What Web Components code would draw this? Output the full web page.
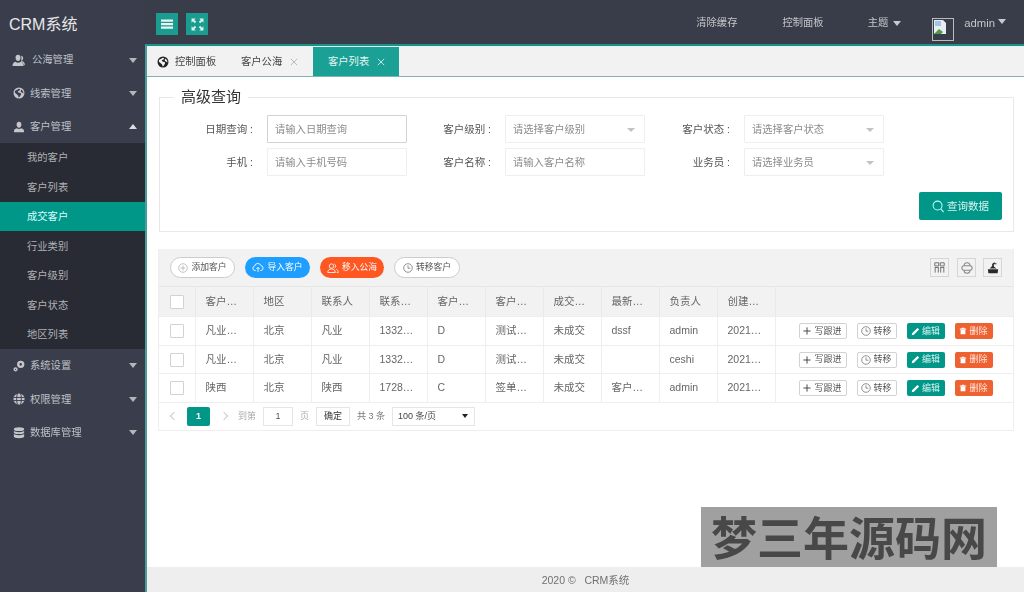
<!DOCTYPE html>
<html lang="zh-CN">
<head>
<meta charset="utf-8">
<title>CRM系统</title>
<style>
html,body{margin:0;height:100%;overflow:hidden;background:#fff}
body{font:10.3px/1.2 "Liberation Sans","Noto Sans CJK SC",sans-serif;color:#666}
</style>
</head>
<body>
<crm-app>
  <crm-sidebar slot="side">
    <crm-nav-item icon="secret" indent>公海管理</crm-nav-item>
    <crm-nav-item icon="globe">线索管理</crm-nav-item>
    <crm-nav-item icon="user" open>客户管理</crm-nav-item>
    <crm-sub-menu>
      <crm-sub-item>我的客户</crm-sub-item>
      <crm-sub-item>客户列表</crm-sub-item>
      <crm-sub-item active>成交客户</crm-sub-item>
      <crm-sub-item>行业类别</crm-sub-item>
      <crm-sub-item>客户级别</crm-sub-item>
      <crm-sub-item>客户状态</crm-sub-item>
      <crm-sub-item>地区列表</crm-sub-item>
    </crm-sub-menu>
    <crm-nav-item icon="key">系统设置</crm-nav-item>
    <crm-nav-item icon="ring">权限管理</crm-nav-item>
    <crm-nav-item icon="db">数据库管理</crm-nav-item>
  </crm-sidebar>
  <crm-header slot="head"></crm-header>
  <crm-tabs slot="main"></crm-tabs>
  <crm-search slot="main"></crm-search>
  <crm-table slot="main"></crm-table>
  <crm-footer slot="foot"></crm-footer>
  <crm-watermark slot="over"></crm-watermark>
</crm-app>
<script>
const ICONS={
 secret:'<svg viewBox="0 0 14 14" width="13" height="13"><path fill="currentColor" d="M6.500.8c1.700 0 2.700 1.300 2.700 3.100 0 1.900-1.100 3.700-2.700 3.700S3.800 5.800 3.800 3.900C3.800 2.100 4.800.8 6.500.8zM.6 12.800c0-2.500 1-4 3-4.500.8.600 1.800 1 2.900 1s2.100-.4 2.900-1c2 .5 3 2 3 4.500z"/><path fill="currentColor" d="M10 1.800c1.300.3 2 1.200 2 2.600 0 1.500-.7 2.700-1.800 3 .9.700 2.500.8 3.500 2.800V12h-1c-.3-1.800-1.200-3-3-3.800.3-1.200.6-4 .3-6.400z"/></svg>',
 globe:'<svg viewBox="0 0 14 14" width="12" height="12"><path fill="currentColor" fill-rule="evenodd" d="M7 .6a6.400 6.400 0 1 0 0 12.800A6.400 6.400 0 0 0 7 .6zM2.400 4.400 5 3.200 6.600 2l1.800.6-.8 1.600-1.600.4-.4 1.200 1.600 1 2 .6.200 1.400-1.600 2.600-1.200.8-.6-2.400L4 8.200 2.200 6.800zM10 2.800l1.800 2.400.4 2.400-1.200-.8-1.400-.6-.8-1.400z"/></svg>',
 user:'<svg viewBox="0 0 14 14" width="12" height="12"><path fill="currentColor" d="M7 .8c1.800 0 2.800 1.300 2.800 3.200S8.800 8 7 8 4.200 5.900 4.200 4 5.200.8 7 .8zM1.200 13v-1.600c0-1.500 1.100-2.500 3.300-3 .7.500 1.500.8 2.500.8s1.800-.3 2.500-.8c2.200.5 3.300 1.500 3.300 3V13z"/></svg>',
 key:'<svg viewBox="0 0 14 14" width="12" height="12"><path fill="currentColor" fill-rule="evenodd" d="M9 .8a4.300 4.300 0 1 1 0 8.600A4.300 4.300 0 0 1 9 .8zm0 2.800a1.500 1.500 0 1 0 0 3 1.500 1.500 0 0 0 0-3zM3 8.400a2.500 2.500 0 1 1 0 5 2.500 2.500 0 0 1 0-5zm0 1.700a.8.800 0 1 0 0 1.600.8.800 0 0 0 0-1.600z"/></svg>',
 ring:'<svg viewBox="0 0 14 14" width="12" height="12"><circle cx="7" cy="7" r="6.500" fill="currentColor"/><g fill="none" stroke="#3a3e4c" stroke-width="1.100"><path d="M.5 5.200h13M.5 8.800h13"/><path d="M5.200.5C4 3 4 11 5.200 13.500M8.800.5C10 3 10 11 8.800 13.500"/></g></svg>',
 db:'<svg viewBox="0 0 14 14" width="12" height="12"><g fill="currentColor"><ellipse cx="7" cy="2.600" rx="6" ry="2.200"/><path d="M1 4.300c1 1.200 3 1.700 6 1.700s5-.5 6-1.700v2.200C13 7.700 10.400 8.300 7 8.300s-6-.6-6-1.800zM1 8c1 1.200 3 1.700 6 1.700S12 9.200 13 8v3.200c0 1.200-2.600 1.900-6 1.900s-6-.7-6-1.900z"/></g></svg>',
 plusc:'<svg viewBox="0 0 14 14" width="10" height="10" fill="none" stroke="#aaa"><circle cx="7" cy="7" r="6"/><path d="M7 3.500v7M3.500 7h7"/></svg>',
 cloud:'<svg viewBox="0 0 16 14" width="12" height="11" fill="none" stroke="#fff" stroke-width="1.200"><path d="M5 11H3.800a3 3 0 0 1-.3-5.900 4.300 4.300 0 0 1 8.300-.6 3.300 3.300 0 0 1 .4 6.500H11M8 12.800V7M5.800 9 8 6.800 10.200 9"/></svg>',
 people:'<svg viewBox="0 0 16 14" width="12" height="12" fill="none" stroke="#fff" stroke-width="1.100"><circle cx="6" cy="4.500" r="3"/><path d="M1 13c0-3 2-4.800 5-4.800s5 1.800 5 4.800zM10 1.800a3 3 0 0 1 0 5.400M12.500 8.800c1.500.6 2.500 2 2.500 4.200h-2"/></svg>',
 clock:'<svg viewBox="0 0 14 14" width="10" height="10" fill="none" stroke="#666"><circle cx="7" cy="7" r="6"/><path d="M7 3.300V7.300h3.200"/></svg>',
 grid:'<svg viewBox="0 0 14 14" width="11" height="11" fill="none" stroke="#555"><path d="M1 1h5v4H1zM8 1h5v4H8zM1 7h5M8 7h5M1.500 7v6.500M5.500 7v6.500M8.500 7v6.500M12.500 7v6.500"/></svg>',
 print:'<svg viewBox="0 0 14 14" width="12" height="12" fill="none" stroke="#888" stroke-width="1.200"><path d="M3.500 4.500C3.500 2.300 4.500 1 7 1s3.500 1.300 3.500 3.500"/><rect x="1" y="4.500" width="12" height="5" rx="2.500"/><path d="M3.500 9.500c0 2.300 1 3.500 3.500 3.500s3.500-1.200 3.500-3.500"/></svg>',
 boat:'<svg viewBox="0 0 14 14" width="12" height="12"><path fill="#2a2a2a" d="M1 8.500h12l-.6 4.500H1.600zM3 7.500l3-2.800V2.200L8.800 0v1.500H11v1.200H8v2.500l3 2.300z"/></svg>',
 search:'<svg viewBox="0 0 14 14" width="13" height="13" fill="none" stroke="#bff" stroke-width="1.100"><circle cx="6" cy="6" r="4.800"/><path d="m9.500 9.500 3 3.500"/></svg>',
 plus:'<svg viewBox="0 0 10 10" width="8" height="8" stroke="#444" stroke-width="1.200"><path d="M5 .5v9M.5 5h9"/></svg>',
 pen:'<svg viewBox="0 0 10 10" width="9" height="9"><path fill="#fff" d="M7.200 1 9 2.800 3.200 8.600.8 9.200l.6-2.400z"/></svg>',
 trash:'<svg viewBox="0 0 10 10" width="8" height="8"><path fill="#fff" d="M1 2h8v1H1zM3.500.8h3V2h-3zM2 3.500h6V9.200H2z"/></svg>',
 x:c=>`<svg class="x" viewBox="0 0 8 8" width="8" height="8" fill="none" stroke="${c}"><path d="m.8.800 6.400 6.400M7.200.800.8 7.200"/></svg>`
};
function def(name,html,init){
  customElements.define(name,class extends HTMLElement{
    constructor(){super();this.attachShadow({mode:'open'}).innerHTML=typeof html==='function'?html(this):html;}
    connectedCallback(){init&&init(this)}
  });
}
def('crm-app',`<style>
:host{display:grid;grid-template-columns:145px 1fr;grid-template-rows:44px 1fr;width:1024px;height:592px;position:relative;overflow:hidden;filter:blur(.35px)}
.side{grid-row:1/3;display:block;background:#3a3e4c}
.head{display:block}
.content{display:flex;flex-direction:column;min-height:0;border-top:2px solid #1f8f89;border-left:2px solid #4a9e99;background:#fff}
.main{flex:1;display:flex;flex-direction:column;min-height:0}
</style>
<div class="side"><slot name="side"></slot></div>
<div class="head"><slot name="head"></slot></div>
<div class="content"><div class="main"><slot name="main"></slot></div><slot name="foot"></slot></div>
<slot name="over"></slot>`);

def('crm-sidebar',`<style>
:host{display:block;color:#c2c4c8}
.logo{height:43px;display:flex;align-items:center;padding-left:9px;font-size:16px;color:#e8e8e8;padding-top:6px;box-sizing:border-box}
</style><div class="logo">CRM系统</div><slot></slot>`);

def('crm-nav-item',h=>{
  const open=h.hasAttribute('open'),ic=ICONS[h.getAttribute('icon')],ind=h.hasAttribute('indent');
  return `<style>
:host{display:flex;align-items:center;height:33.3px;color:#bfc1c5;box-sizing:border-box;padding-top:1px}
.i{width:13px;margin-left:12px;margin-right:${ind?7:5}px;display:flex;justify-content:center;color:#c4c6ca}
.t{flex:1;padding-top:1px}
.a{width:0;height:0;border:4.500px solid transparent;margin-right:8px;${open?'border-bottom:5px solid #ddd;border-top:0;':'border-top:5px solid #b4b6ba;border-bottom:0;'}}
</style><span class="i">${ic}</span><span class="t"><slot></slot></span><span class="a"></span>`;
});
def('crm-sub-menu',`<style>:host{display:block;background:#282b33}</style><slot></slot>`);
def('crm-sub-item',`<style>
:host{display:flex;align-items:center;height:29.43px;padding:2px 0 0 27px;color:#b0b2b6;box-sizing:border-box}
:host([active]){background:#009688;color:#dff}
</style><slot></slot>`);

def('crm-header',`<style>
:host{display:flex;align-items:center;height:44px;background:#393d49;color:#c4c6ca;box-sizing:border-box}
.b{width:22px;height:22px;background:#1a9c90;display:flex;align-items:center;justify-content:center;margin-top:4px}
.l{display:flex;gap:8px;margin-left:11px;flex:1}
.r{display:flex;align-items:center;margin-top:3px}
.n{margin-right:45px}
.n.c{margin-right:44px}
.n.t{margin-right:31px;display:flex;align-items:center;gap:5px}
.tri{width:0;height:0;border:4px solid transparent;border-top:5px solid #c8cacd;border-bottom:0}
.av{width:22px;height:23px;border:1px solid #bbb;margin-top:11px;margin-right:10px;display:block;box-sizing:border-box}
.ad{display:flex;gap:3px;margin-right:18px;align-items:center;font-size:11.300px}
.ad .tri{margin-top:-3px}
</style>
<div class="l">
 <span class="b"><svg viewBox="0 0 12 12" width="12" height="12"><path fill="#e8f6f4" d="M0 1.500h12v2.200H0zM0 5h12v2.200H0zM0 8.500h12v2.200H0z"/></svg></span>
 <span class="b"><svg viewBox="0 0 12 12" width="13" height="13"><path fill="#dff3f0" d="M.5.500h3.800L3 1.800 4.800 3.500 3.500 4.800 1.800 3 .5 4.300zM11.500.500H7.700L9 1.800 7.200 3.500l1.300 1.300L10.200 3l1.300 1.300zM.5 11.500h3.800L3 10.200l1.800-1.700-1.300-1.300L1.800 9 .5 7.700zM11.500 11.500H7.700L9 10.200 7.200 8.500l1.300-1.300L10.200 9l1.300-1.300z"/></svg></span>
</div>
<div class="r">
 <span class="n">清除缓存</span><span class="n c">控制面板</span>
 <span class="n t">主题<i class="tri"></i></span>
 <svg class="av" viewBox="0 0 20 21"><path fill="#e8edf2" d="M1 1h9l3 3v11H1z"/><path fill="#4f9a4a" d="M1 15l5-5 4 3-2 2z"/><path fill="#9fc4e4" d="M2 2h6v5H2z"/></svg>
 <span class="ad">admin<i class="tri"></i></span>
</div>`);

def('crm-tabs',`<style>
:host{display:flex;height:31px;background:#f2f2f2;border-top:1px solid #dcf5f1;border-bottom:1px solid #7fb5b0;box-sizing:border-box;color:#444;flex:none}
.t{display:flex;align-items:center;height:100%;box-sizing:border-box;padding-top:1px}
.x{margin-left:8px}
.home{padding-left:10px;gap:6px;width:79px}
.home svg{color:#222}
.sea{width:87px;padding-left:15px}
.on{background:#1aa094;color:#e4f5f3;padding-left:15px;width:86px}
</style>
<span class="t home">${ICONS.globe}<span>控制面板</span></span>
<span class="t sea"><span>客户公海</span>${ICONS.x('#bbb')}</span>
<span class="t on"><span>客户列表</span>${ICONS.x('#bfe6e0')}</span>`);

def('crm-field',h=>{
  const sel=h.hasAttribute('select'),foc=h.hasAttribute('focus');
  return `<style>
:host{display:flex;align-items:center;gap:13px;color:#555}
.lab{width:85px;box-sizing:border-box;padding:1px 1px 0 0;text-align:right;flex:none;white-space:nowrap;font-size:10.500px}
.box{width:140px;height:28px;box-sizing:border-box;border:1px solid ${foc?'#d2d2d2':'#eee'};display:flex;align-items:center;padding:2px 7px 0 7px;justify-content:space-between;color:#8c8c8c;background:#fff;border-radius:1px}
.a{width:0;height:0;border:4px solid transparent;border-top:4.500px solid #c2c2c2;border-bottom:0;margin-right:2px}
</style><span class="lab">${h.getAttribute('label')} :</span><span class="box"><span><slot></slot></span>${sel?'<i class="a"></i>':''}</span>`;
});
def('crm-search',`<style>
:host{display:block;margin:9px 10px 0 12px;flex:none}
fieldset{margin:0;padding:7px 11px 11px 9px;border:1px solid #e8e8e8;min-width:0}
legend{margin-left:5px;padding:0 7px;font-size:15px;line-height:22px;color:#333}
.g{display:grid;grid-template-columns:238px 239px 238px;row-gap:5px}
.f{display:flex;justify-content:flex-end;margin-top:16px}
.btn{width:83px;height:28px;background:#009688;color:#d8f2ef;display:flex;align-items:center;justify-content:center;gap:2px;border-radius:2px;font-size:10.500px}
</style>
<fieldset><legend>高级查询</legend>
<div class="g">
<crm-field label="日期查询" focus>请输入日期查询</crm-field>
<crm-field label="客户级别" select>请选择客户级别</crm-field>
<crm-field label="客户状态" select>请选择客户状态</crm-field>
<crm-field label="手机">请输入手机号码</crm-field>
<crm-field label="客户名称">请输入客户名称</crm-field>
<crm-field label="业务员" select>请选择业务员</crm-field>
</div>
<div class="f"><span class="btn">${ICONS.search}<span>查询数据</span></span></div>
</fieldset>`);

const HEAD=['客户…','地区','联系人','联系…','客户…','客户…','成交…','最新…','负责人','创建…'];
const ROWS=[
 ['凡业…','北京','凡业','1332…','D','测试…','未成交','dssf','admin','2021…'],
 ['凡业…','北京','凡业','1332…','D','测试…','未成交','','ceshi','2021…'],
 ['陕西','北京','陕西','1728…','C','签单…','未成交','客户…','admin','2021…']
];
const acts=`<span class="acts"><span class="ab w">${ICONS.plus}写跟进</span><span class="ab g">${ICONS.clock}转移</span><span class="ab e">${ICONS.pen}编辑</span><span class="ab d">${ICONS.trash}删除</span></span>`;
def('crm-table',`<style>
:host{display:block;margin:17px 10px 0 11px;border:1px solid #eee;border-top:0;flex:none;box-sizing:border-box;height:182px;color:#666}
.tb{height:38px;background:#f2f2f2;border-bottom:1px solid #e6e6e6;box-sizing:border-box;display:flex;align-items:center;padding:0 11px 0 11px;gap:10px}
.p{width:65px;height:21px;border-radius:11px;display:flex;align-items:center;justify-content:center;gap:3px;font-size:8.800px;box-sizing:border-box;border:1px solid #ccc;background:#fff;color:#555}
.p.bl{background:#1e9fff;border:0;color:#fff}.p.or{background:#ff5722;border:0;color:#fff;width:64px}
.p.tr{width:66px}
.sp{flex:1}
.s{width:19px;height:19px;border:1px solid #d6d6d6;box-sizing:border-box;display:flex;align-items:center;justify-content:center;margin-left:-2px}
table{border-collapse:collapse;table-layout:fixed;width:100%;font-size:10.500px}
th,td{border-right:1px solid #eee;border-bottom:1px solid #eee;padding:0 0 0 10px;text-align:left;font-weight:400;white-space:nowrap;overflow:hidden;height:28px;box-sizing:border-box}
th{background:#f2f2f2;height:29px;color:#666;border-right-color:#e9e9e9;padding-top:1px}
tr.r1 td{height:29px}
td:last-child,th:last-child{border-right:0}
.ck{padding:1px 0 0 11px}
.c{display:block;width:14px;height:14px;border:1px solid #d2d2d2;background:#fff;box-sizing:border-box;border-radius:1px}
td:last-child{padding:1px 0 0 23px}
.acts{display:flex;gap:10px;font-size:9px}
.ab{height:16px;box-sizing:border-box;display:flex;align-items:center;justify-content:center;gap:2px;border-radius:2px}
.ab.w{width:48px;border:1px solid #d2d2d2;color:#555;background:#fff;gap:3px}
.ab.g{width:40px;border:1px solid #d2d2d2;color:#555;background:#fff}
.ab.e{width:38px;background:#009688;color:#d8f2ef}
.ab.d{width:38px;background:#ee6232;color:#ffe6dc}
.pg{height:27px;display:flex;align-items:center;font-size:9px;color:#777}
.pg .nav{width:6px;height:6px;border-left:1px solid #ccc;border-bottom:1px solid #ccc;transform:rotate(45deg);margin-left:12px;box-sizing:border-box}
.pg .nav.n{transform:rotate(225deg);margin-left:11px}
.pg .cur{width:23px;height:19px;background:#009688;color:#fff;display:flex;align-items:center;justify-content:center;border-radius:2px;margin-left:10px;font-weight:700}
.pg .txt{margin-left:11px}
.pg .lt{color:#aaa}
.pg .inp{width:30px;height:19px;border:1px solid #e6e6e6;display:flex;align-items:center;justify-content:center;box-sizing:border-box;margin-left:7px;color:#555}
.pg .ok{width:34px;height:19px;border:1px solid #e6e6e6;display:flex;align-items:center;justify-content:center;box-sizing:border-box;margin-left:7px;color:#333}
.pg .sel{width:83px;height:19px;border:1px solid #e6e6e6;display:flex;align-items:center;justify-content:space-between;box-sizing:border-box;margin-left:7px;padding:0 6px 0 5px;color:#444}
.pg .tri{width:0;height:0;border:3px solid transparent;border-top:4px solid #222;border-bottom:0}
</style>
<div class="tb">
 <span class="p">${ICONS.plusc}添加客户</span>
 <span class="p bl">${ICONS.cloud}导入客户</span>
 <span class="p or">${ICONS.people}移入公海</span>
 <span class="p tr">${ICONS.clock}转移客户</span>
 <span class="sp"></span>
 <span class="s">${ICONS.grid}</span><span class="s">${ICONS.print}</span><span class="s" style="margin-left:-3px">${ICONS.boat}</span>
</div>
<table>
<colgroup><col style="width:36px">${'<col style="width:58px">'.repeat(10)}<col></colgroup>
<tr><th class="ck"><i class="c"></i></th>${HEAD.map(t=>`<th>${t}</th>`).join('')}<th></th></tr>
${ROWS.map((r,i)=>`<tr class="r${i==1?0:1}"><td class="ck"><i class="c"></i></td>${r.map(t=>`<td>${t}</td>`).join('')}<td>${acts}</td></tr>`).join('')}
</table>
<div class="pg">
 <i class="nav"></i><span class="cur">1</span><i class="nav n"></i>
 <span class="txt lt">到第</span><span class="inp">1</span><span class="txt lt" style="margin-left:7px">页</span>
 <span class="ok">确定</span><span class="txt" style="margin-left:7px">共 3 条</span>
 <span class="sel"><span>100 条/页</span><i class="tri"></i></span>
</div>`);
def('crm-footer',`<style>
:host{display:flex;height:25px;background:#eee;align-items:center;justify-content:center;color:#707070;flex:none;padding-top:2px;box-sizing:border-box;font-size:10.500px}
</style>2020 ©&nbsp;&nbsp;&nbsp;CRM系统`);
def('crm-watermark',`<style>
:host{position:absolute;left:701px;top:507px;width:296px;height:60px;background:#a0a0a0;color:#484848;display:flex;align-items:center;justify-content:center;font:700 46px/1 "Noto Sans CJK SC",sans-serif;padding-bottom:5px;box-sizing:border-box}
</style>梦三年源码网`);
</script>
</body>
</html>
